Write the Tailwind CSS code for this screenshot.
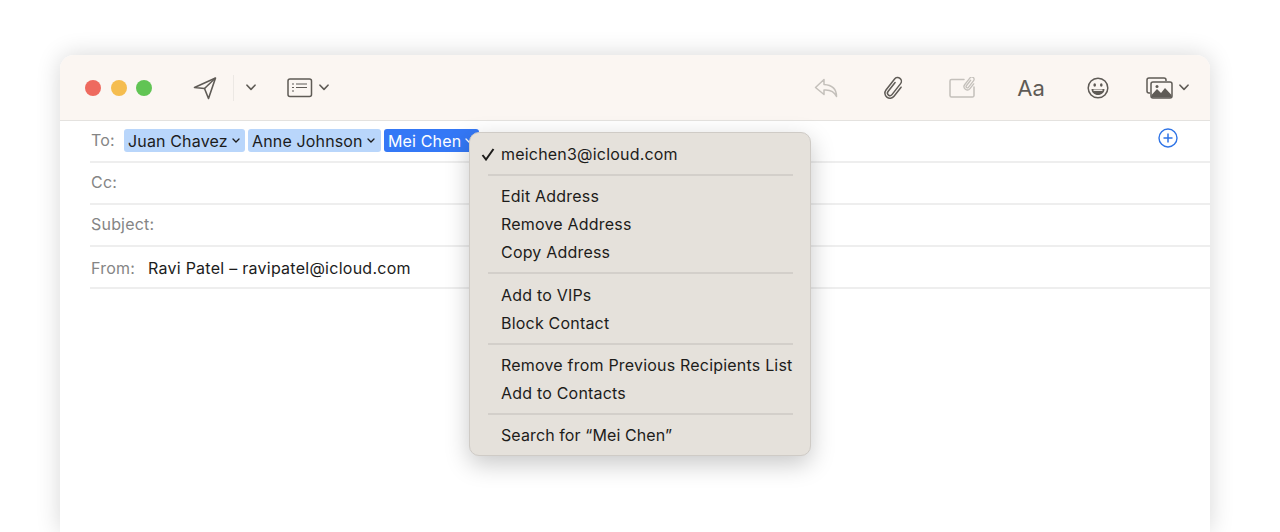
<!DOCTYPE html>
<html lang="en">
<head>
    <meta charset="UTF-8">
    <title>New Message</title>
    <script src="https://cdn.jsdelivr.net/npm/@tailwindcss/browser@4"></script>
</head>
<body class="bg-white h-[532px] overflow-hidden font-['Inter','Liberation_Sans',sans-serif]">
    <div class="pt-[55px] pl-[60px]">
        <div class="relative w-[1150px] h-[477px] bg-white rounded-t-[14px] shadow-[0_0_24px_rgba(0,0,0,0.16)]">
            <!-- toolbar -->
            <div class="flex items-center h-[66px] bg-[#fbf6f2] rounded-t-[14px] border-b border-[#e4e2df] text-[#5f5b56]">
                <div class="flex items-center gap-[9.5px] ml-[25px]">
                    <span class="w-4 h-4 rounded-full bg-[#ee6a5f]"></span>
                    <span class="w-4 h-4 rounded-full bg-[#f5bd4f]"></span>
                    <span class="w-4 h-4 rounded-full bg-[#61c454]"></span>
                </div>
                <svg class="ml-[41px]" width="24" height="24" viewBox="0 0 24 24" fill="none" stroke="currentColor" stroke-width="1.6" stroke-linejoin="round"><path d="M1.500 11.500 22.500 2 15.500 22.500 11.500 12.500Z"/><path d="M11.500 12.500 22.500 2"/></svg>
                <span class="ml-[16px] w-px h-[26px] bg-[#ece8e4]"></span>
                <svg class="ml-[12px]" width="10" height="7" viewBox="0 0 10 7" fill="none" stroke="currentColor" stroke-width="1.6" stroke-linecap="round" stroke-linejoin="round"><path d="M1 1.200 5 5.400 9 1.200"/></svg>
                <svg class="ml-[31px]" width="26" height="20" viewBox="0 0 26 20" fill="none" stroke="currentColor" stroke-width="1.500"><rect x="1" y="1" width="23.500" height="17.500" rx="2"/><path d="M5 6h2M9 6h11M5 9.500h2M9 9.500h11M5 13h2" stroke-width="1.200"/></svg>
                <svg class="ml-[6px]" width="10" height="7" viewBox="0 0 10 7" fill="none" stroke="currentColor" stroke-width="1.6" stroke-linecap="round" stroke-linejoin="round"><path d="M1 1.200 5 5.400 9 1.200"/></svg>

                <svg class="ml-[485px] text-[#c4c0bb]" width="24" height="20" viewBox="0 0 24 20" fill="none" stroke="currentColor" stroke-width="1.500" stroke-linejoin="round"><path d="M10 1.500 1.500 9.500 10 16.500V12C15.500 11.500 20 13 22.500 18.500 22.500 11.500 18 7 10 6.500Z"/></svg>
                <svg class="ml-[45px]" width="22" height="24" viewBox="0 0 22 24" fill="none" stroke="currentColor" stroke-width="1.500" stroke-linecap="round"><g transform="rotate(38 11 12)"><path d="M8.500 7v11.500a2.500 2.500 0 0 0 5 0V4.500a3.800 3.800 0 0 0-7.600 0v14a5.100 5.100 0 0 0 10.200 0V7"/></g></svg>
                <svg class="ml-[44px] text-[#c4c0bb]" width="26" height="21" viewBox="0 0 26 21" fill="none" stroke="currentColor" stroke-width="1.500" stroke-linecap="round"><path d="M15 2.500H2.500a1.500 1.500 0 0 0-1.500 1.500v14.500a1.500 1.500 0 0 0 1.500 1.500h21a1.500 1.500 0 0 0 1.500-1.500V10"/><g transform="rotate(38 20 7)" stroke-width="1.300"><path d="M19 3v7a1.300 1.300 0 0 0 2.600 0V1.500a2.300 2.300 0 0 0-4.600 0V10a3.300 3.300 0 0 0 6.600 0V4"/></g></svg>
                <span class="ml-[42px] w-[28px] text-[22px] leading-none text-center">Aa</span>
                <svg class="ml-[42px]" width="22" height="22" viewBox="0 0 22 22" fill="none" stroke="currentColor" stroke-width="1.500"><circle cx="11" cy="11" r="9.800"/><ellipse cx="7.700" cy="8" rx="1.300" ry="1.800" fill="currentColor" stroke="none"/><ellipse cx="14.300" cy="8" rx="1.300" ry="1.800" fill="currentColor" stroke="none"/><path d="M4.500 12h13c0 3.500-3 6-6.500 6s-6.500-2.500-6.500-6Z" fill="currentColor" stroke="none"/><path d="M6.500 13.200h9" stroke="#fbf6f2" stroke-width="1.400"/></svg>
                <svg class="ml-[37px]" width="27" height="22" viewBox="0 0 27 22" fill="none" stroke="currentColor" stroke-width="1.500"><path d="M4 16H3a2 2 0 0 1-2-2V3a2 2 0 0 1 2-2h15a2 2 0 0 1 2 2v1"/><rect x="5" y="5" width="21" height="16" rx="2" fill="#fbf6f2"/><path d="M5.500 18 11 12l4 4 4-5 6.500 7v1.500a1 1 0 0 1-1 1H6.500a1 1 0 0 1-1-1Z" fill="currentColor" stroke="none"/><circle cx="11" cy="9.500" r="1.500" fill="currentColor" stroke="none"/></svg>
                <svg class="ml-[6px]" width="10" height="7" viewBox="0 0 10 7" fill="none" stroke="currentColor" stroke-width="1.6" stroke-linecap="round" stroke-linejoin="round"><path d="M1 1.200 5 5.400 9 1.200"/></svg>
            </div>

            <!-- address fields -->
            <div class="ml-[30px] text-[16px] leading-[22px] tracking-[0.2px]">
                <div class="relative flex items-center h-[42px] pb-[1px] pl-[1px] border-b-2 border-[#eeeeee]">
                    <span class="w-[33px] mb-[2px] text-[#858585]">To:</span>
                    <div class="flex gap-[3px] text-[#1c1c1c] tracking-[0.15px]">
                        <span class="flex items-center gap-[4px] h-[23px] w-[121px] pl-[4px] rounded-[3px] bg-[#b9d6fb]">Juan Chavez<svg width="8" height="5" viewBox="0 0 8 5" fill="none" stroke="currentColor" stroke-width="1.300" stroke-linecap="round"><path d="M1 1 4 4 7 1"/></svg></span>
                        <span class="flex items-center gap-[4px] h-[23px] w-[133px] pl-[4px] rounded-[3px] bg-[#b9d6fb]">Anne Johnson<svg width="8" height="5" viewBox="0 0 8 5" fill="none" stroke="currentColor" stroke-width="1.300" stroke-linecap="round"><path d="M1 1 4 4 7 1"/></svg></span>
                        <span class="flex items-center gap-[4px] h-[23px] w-[95px] pl-[4px] rounded-[3px] bg-[#3478f6] text-white">Mei Chen<svg width="8" height="5" viewBox="0 0 8 5" fill="none" stroke="currentColor" stroke-width="1.300" stroke-linecap="round"><path d="M1 1 4 4 7 1"/></svg></span>
                    </div>
                    <svg class="absolute left-[1068px] top-[7px]" width="20" height="20" viewBox="0 0 20 20" fill="none" stroke="#2f74e6" stroke-width="1.400"><circle cx="10" cy="10" r="9"/><path d="M10 5.500v9M5.500 10h9" stroke-width="1.500"/></svg>
                </div>
                <div class="flex items-center h-[42px] pb-[2px] pl-[1px] border-b-2 border-[#eeeeee] text-[#858585]">Cc:</div>
                <div class="flex items-center h-[42px] pb-[2px] pl-[1px] border-b-2 border-[#eeeeee] text-[#858585]">Subject:</div>
                <div class="flex items-center h-[42px] pt-[2px] pl-[1px] border-b-2 border-[#eeeeee]">
                    <span class="w-[57px] text-[#858585]">From:</span>
                    <span class="text-[#1c1c1c] tracking-[0.26px]">Ravi Patel – ravipatel@icloud.com</span>
                </div>
            </div>

            <!-- recipient menu -->
            <div class="absolute left-[409px] top-[77px] w-[342px] h-[324px] pt-[7px] rounded-[10px] bg-[#e5e1db] border border-[#cfcbc6] shadow-[0_8px_24px_rgba(0,0,0,0.22)] text-[16px] leading-[28px] tracking-[0.2px] text-[#1d1c1a]">
                <div class="relative pl-[31px]">
                    <svg class="absolute left-[11px] top-[8px]" width="14" height="13" viewBox="0 0 14 13" fill="none" stroke="currentColor" stroke-width="2"><path d="M1.500 7 5 11.500 12.500 1"/></svg>
                    meichen3@icloud.com
                </div>
                <div class="ml-[18px] mr-[17px] my-[6px] h-[2px] bg-[#d3cfca]"></div>
                <div class="pl-[31px]">Edit Address</div>
                <div class="pl-[31px]">Remove Address</div>
                <div class="pl-[31px]">Copy Address</div>
                <div class="ml-[18px] mr-[17px] mt-[6px] mb-[7px] h-[2px] bg-[#d3cfca]"></div>
                <div class="pl-[31px]">Add to VIPs</div>
                <div class="pl-[31px]">Block Contact</div>
                <div class="ml-[18px] mr-[17px] my-[6px] h-[2px] bg-[#d3cfca]"></div>
                <div class="pl-[31px] whitespace-nowrap">Remove from Previous Recipients List</div>
                <div class="pl-[31px]">Add to Contacts</div>
                <div class="ml-[18px] mr-[17px] my-[6px] h-[2px] bg-[#d3cfca]"></div>
                <div class="pl-[31px] tracking-[0.1px]">Search for “Mei Chen”</div>
            </div>
        </div>
    </div>
</body>
</html>
